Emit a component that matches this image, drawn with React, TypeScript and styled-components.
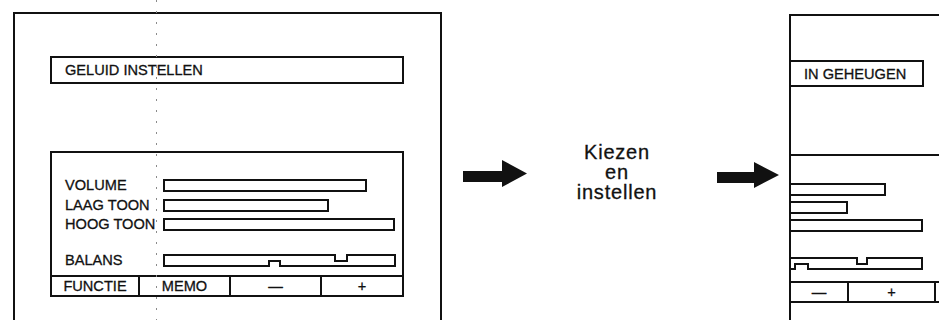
import React, { FC } from 'react';
import styled, { createGlobalStyle } from 'styled-components';

const GlobalStyle = createGlobalStyle`
  body {
    margin: 0;
    background: #ffffff;
    font-family: 'Liberation Sans', Arial, sans-serif;
    color: #111111;
    overflow: hidden;
  }
`;

const INK = `#111111`;

const Page = styled.div`
  position: relative;
  display: flex;
  align-items: flex-start;
  width: 939px;
  height: 320px;
  overflow: hidden;
  -webkit-text-stroke: 0.3px ${INK};
`;

const FoldLine = styled.div`
  position: absolute;
  left: 156px;
  top: 0;
  width: 1px;
  height: 320px;
  background: repeating-linear-gradient(
    to bottom,
    #8a8a8a 0 2px,
    transparent 2px 11px
  );
  pointer-events: none;
`;

const Screen = styled.div<{ $cropped?: boolean }>`
  box-sizing: border-box;
  flex: 0 0 auto;
  display: flex;
  flex-direction: column;
  height: 330px;
  border-top: 2px solid ${INK};
  border-left: 2px solid ${INK};
  border-right: ${(p) => (p.$cropped ? `none` : `2px solid ${INK}`)};
  margin: ${(p) => (p.$cropped ? `14px 0 0 10px` : `12px 0 0 13px`)};
  width: ${(p) => (p.$cropped ? `180px` : `429px`)};
  padding: ${(p) => (p.$cropped ? `44px 0 0 0` : `42px 0 0 35px`)};
`;

const TitleBox = styled.div<{ $width: number; $cropped?: boolean }>`
  box-sizing: border-box;
  display: flex;
  align-items: center;
  width: ${(p) => p.$width}px;
  height: ${(p) => (p.$cropped ? 27 : 28)}px;
  border: 2px solid ${INK};
  border-left: ${(p) => (p.$cropped ? `none` : `2px solid ${INK}`)};
  padding-left: 13px;
  font-size: 14.6px;
  white-space: nowrap;
`;

const Panel = styled.div<{ $width: number; $height: number; $cropped?: boolean }>`
  box-sizing: border-box;
  display: flex;
  flex-direction: column;
  margin-top: 67px;
  width: ${(p) => p.$width}px;
  height: ${(p) => p.$height}px;
  border: 2px solid ${INK};
  border-left: ${(p) => (p.$cropped ? `none` : `2px solid ${INK}`)};
  border-right: ${(p) => (p.$cropped ? `none` : `2px solid ${INK}`)};
`;

const SliderList = styled.div<{ $padTop: number; $gap: number; $indent: number }>`
  display: flex;
  flex-direction: column;
  gap: ${(p) => p.$gap}px;
  padding: ${(p) => p.$padTop}px 0 0 ${(p) => p.$indent}px;
`;

const SliderRow = styled.div<{ $labelWidth: number; $spaced?: number }>`
  display: grid;
  grid-template-columns: ${(p) => p.$labelWidth}px auto;
  align-items: center;
  height: 13px;
  margin-top: ${(p) => p.$spaced ?? 0}px;
`;

const Label = styled.span`
  font-size: 14.6px;
  line-height: 13px;
  white-space: nowrap;
`;

const Bar = styled.div<{ $width: number; $cropped?: boolean }>`
  box-sizing: border-box;
  width: ${(p) => p.$width}px;
  height: 13px;
  border: 2px solid ${INK};
  border-left: ${(p) => (p.$cropped ? `none` : `2px solid ${INK}`)};
`;

const ButtonRow = styled.div`
  box-sizing: border-box;
  display: flex;
  margin-top: auto;
  height: 20px;
  border-top: 2px solid ${INK};
`;

const Key = styled.div<{ $width: number; $last?: boolean }>`
  box-sizing: border-box;
  display: flex;
  align-items: center;
  justify-content: center;
  width: ${(p) => p.$width}px;
  height: 100%;
  border-right: ${(p) => (p.$last ? `none` : `2px solid ${INK}`)};
  font-size: 14.6px;
  white-space: nowrap;
`;

const Middle = styled.div`
  display: flex;
  align-items: flex-start;
  flex: 0 0 auto;
`;

const ArrowSvg = styled.svg<{ $top: number; $left: number }>`
  display: block;
  flex: 0 0 auto;
  margin: ${(p) => p.$top}px 0 0 ${(p) => p.$left}px;
`;

const Caption = styled.div`
  width: 180px;
  margin-top: 142px;
  text-align: center;
  font-size: 20px;
  line-height: 20px;
  letter-spacing: 0.8px;
`;

interface ArrowProps {
  width: number;
  height: number;
  top: number;
  left: number;
}

const Arrow: FC<ArrowProps> = ({ width, height, top, left }) => {
  const head = width - 25;
  const mid = height / 2;
  const shaftTop = Math.round(height * 0.4);
  const shaftBottom = Math.round(height * 0.8);
  return (
    <ArrowSvg
      $top={top}
      $left={left}
      width={width}
      height={height}
      viewBox={`0 0 ${width} ${height}`}
    >
      <polygon
        fill={INK}
        points={`0,${shaftTop} ${head},${shaftTop} ${head},0 ${width},${mid} ${head},${height} ${head},${shaftBottom} 0,${shaftBottom}`}
      />
    </ArrowSvg>
  );
};

interface BalanceProps {
  width: number;
  path: string;
}

const BalanceBar: FC<BalanceProps> = ({ width, path }) => (
  <svg width={width} height={13} viewBox={`0 0 ${width} 13`} style={{ display: 'block' }}>
    <path d={path} fill="none" stroke={INK} strokeWidth={2} />
  </svg>
);

const sliders = [
  { label: `VOLUME`, full: 204, short: 95 },
  { label: `LAAG TOON`, full: 166, short: 57 },
  { label: `HOOG TOON`, full: 232, short: 132 },
];

const App: FC = () => (
  <>
    <GlobalStyle />
    <Page>
      <Screen>
        <TitleBox $width={354}>GELUID INSTELLEN</TitleBox>
        <Panel $width={354} $height={146}>
          <SliderList $padTop={26} $gap={6.5} $indent={13}>
            {sliders.map((s) => (
              <SliderRow key={s.label} $labelWidth={98}>
                <Label>{s.label}</Label>
                <Bar $width={s.full} />
              </SliderRow>
            ))}
            <SliderRow $labelWidth={98} $spaced={16}>
              <Label>BALANS</Label>
              <BalanceBar
                width={233}
                path="M1,1 H172 V7 H184 V1 H232 V12 H117 V7 H106 V12 H1 Z"
              />
            </SliderRow>
          </SliderList>
          <ButtonRow>
            <Key $width={88}>FUNCTIE</Key>
            <Key $width={91}>MEMO</Key>
            <Key $width={91}>—</Key>
            <Key $width={80} $last>
              +
            </Key>
          </ButtonRow>
        </Panel>
      </Screen>

      <Middle>
        <Arrow width={64} height={27} top={160} left={21} />
        <Caption>
          Kiezen
          <br />
          en
          <br />
          instellen
        </Caption>
        <Arrow width={62} height={26} top={162} left={10} />
      </Middle>

      <Screen $cropped>
        <TitleBox $width={133} $cropped>
          IN GEHEUGEN
        </TitleBox>
        <Panel $width={178} $height={149} $cropped>
          <SliderList $padTop={27} $gap={5} $indent={0}>
            {sliders.map((s) => (
              <SliderRow key={s.label} $labelWidth={0}>
                <span />
                <Bar $width={s.short} $cropped />
              </SliderRow>
            ))}
            <SliderRow $labelWidth={0} $spaced={20}>
              <span />
              <BalanceBar
                width={132}
                path="M0,1 H66 V7 H76 V1 H131 V12 H17 V7 H4 V12 H0"
              />
            </SliderRow>
          </SliderList>
          <ButtonRow>
            <Key $width={58}>—</Key>
            <Key $width={87}>+</Key>
          </ButtonRow>
        </Panel>
      </Screen>
      <FoldLine />
    </Page>
  </>
);

export default App;
